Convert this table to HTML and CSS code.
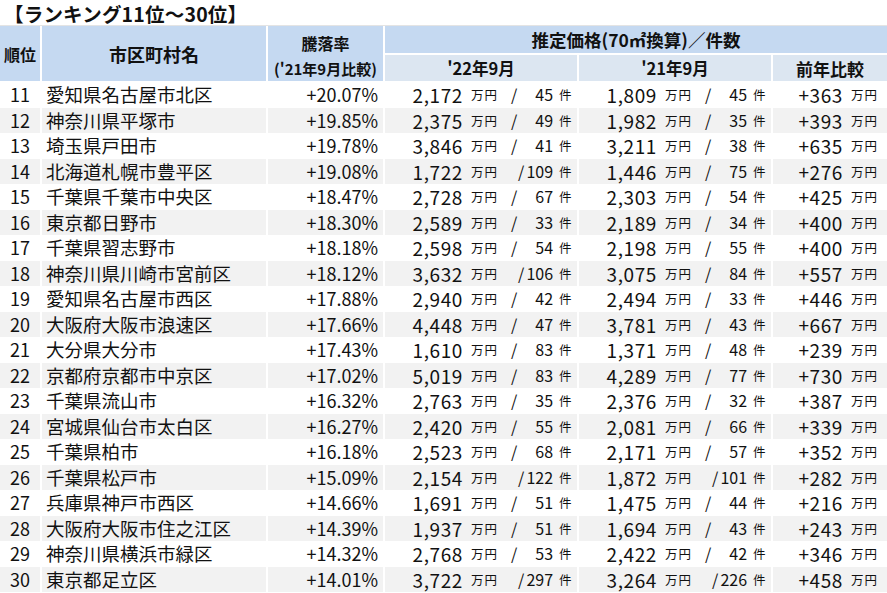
FILE: index.html
```html
<!DOCTYPE html>
<html lang="ja">
<head>
<meta charset="utf-8">
<title>ランキング11位～30位</title>
<link rel="stylesheet" href="styles.css">
</head>
<body>
<div class="title">【ランキング11位～30位】</div>
<div class="thead">
  <div class="h dark rank">順位</div>
  <div class="h dark name">市区町村名</div>
  <div class="h dark rate"><span class="l1">騰落率</span><span class="l2">('21年9月比較)</span></div>
  <div class="h dark price">推定価格(70㎡換算)／件数</div>
  <div class="h light y22">'22年9月</div>
  <div class="h light y21">'21年9月</div>
  <div class="h light diff">前年比較</div>
</div>
<div class="tbody">
  <div class="row"><div class="c r">11</div><div class="c nm">愛知県名古屋市北区</div><div class="c pc">+20.07%</div><div class="c p"><span class="n">2,172</span><span class="u">万円</span><span class="k"><span>/</span><span>45</span></span><span class="u kn">件</span></div><div class="c p"><span class="n">1,809</span><span class="u">万円</span><span class="k"><span>/</span><span>45</span></span><span class="u kn">件</span></div><div class="c d"><span class="n">+363</span><span class="u">万円</span></div></div>
  <div class="row"><div class="c r">12</div><div class="c nm">神奈川県平塚市</div><div class="c pc">+19.85%</div><div class="c p"><span class="n">2,375</span><span class="u">万円</span><span class="k"><span>/</span><span>49</span></span><span class="u kn">件</span></div><div class="c p"><span class="n">1,982</span><span class="u">万円</span><span class="k"><span>/</span><span>35</span></span><span class="u kn">件</span></div><div class="c d"><span class="n">+393</span><span class="u">万円</span></div></div>
  <div class="row"><div class="c r">13</div><div class="c nm">埼玉県戸田市</div><div class="c pc">+19.78%</div><div class="c p"><span class="n">3,846</span><span class="u">万円</span><span class="k"><span>/</span><span>41</span></span><span class="u kn">件</span></div><div class="c p"><span class="n">3,211</span><span class="u">万円</span><span class="k"><span>/</span><span>38</span></span><span class="u kn">件</span></div><div class="c d"><span class="n">+635</span><span class="u">万円</span></div></div>
  <div class="row"><div class="c r">14</div><div class="c nm">北海道札幌市豊平区</div><div class="c pc">+19.08%</div><div class="c p"><span class="n">1,722</span><span class="u">万円</span><span class="k w3"><span>/</span><span>109</span></span><span class="u kn">件</span></div><div class="c p"><span class="n">1,446</span><span class="u">万円</span><span class="k"><span>/</span><span>75</span></span><span class="u kn">件</span></div><div class="c d"><span class="n">+276</span><span class="u">万円</span></div></div>
  <div class="row"><div class="c r">15</div><div class="c nm">千葉県千葉市中央区</div><div class="c pc">+18.47%</div><div class="c p"><span class="n">2,728</span><span class="u">万円</span><span class="k"><span>/</span><span>67</span></span><span class="u kn">件</span></div><div class="c p"><span class="n">2,303</span><span class="u">万円</span><span class="k"><span>/</span><span>54</span></span><span class="u kn">件</span></div><div class="c d"><span class="n">+425</span><span class="u">万円</span></div></div>
  <div class="row"><div class="c r">16</div><div class="c nm">東京都日野市</div><div class="c pc">+18.30%</div><div class="c p"><span class="n">2,589</span><span class="u">万円</span><span class="k"><span>/</span><span>33</span></span><span class="u kn">件</span></div><div class="c p"><span class="n">2,189</span><span class="u">万円</span><span class="k"><span>/</span><span>34</span></span><span class="u kn">件</span></div><div class="c d"><span class="n">+400</span><span class="u">万円</span></div></div>
  <div class="row"><div class="c r">17</div><div class="c nm">千葉県習志野市</div><div class="c pc">+18.18%</div><div class="c p"><span class="n">2,598</span><span class="u">万円</span><span class="k"><span>/</span><span>54</span></span><span class="u kn">件</span></div><div class="c p"><span class="n">2,198</span><span class="u">万円</span><span class="k"><span>/</span><span>55</span></span><span class="u kn">件</span></div><div class="c d"><span class="n">+400</span><span class="u">万円</span></div></div>
  <div class="row"><div class="c r">18</div><div class="c nm">神奈川県川崎市宮前区</div><div class="c pc">+18.12%</div><div class="c p"><span class="n">3,632</span><span class="u">万円</span><span class="k w3"><span>/</span><span>106</span></span><span class="u kn">件</span></div><div class="c p"><span class="n">3,075</span><span class="u">万円</span><span class="k"><span>/</span><span>84</span></span><span class="u kn">件</span></div><div class="c d"><span class="n">+557</span><span class="u">万円</span></div></div>
  <div class="row"><div class="c r">19</div><div class="c nm">愛知県名古屋市西区</div><div class="c pc">+17.88%</div><div class="c p"><span class="n">2,940</span><span class="u">万円</span><span class="k"><span>/</span><span>42</span></span><span class="u kn">件</span></div><div class="c p"><span class="n">2,494</span><span class="u">万円</span><span class="k"><span>/</span><span>33</span></span><span class="u kn">件</span></div><div class="c d"><span class="n">+446</span><span class="u">万円</span></div></div>
  <div class="row"><div class="c r">20</div><div class="c nm">大阪府大阪市浪速区</div><div class="c pc">+17.66%</div><div class="c p"><span class="n">4,448</span><span class="u">万円</span><span class="k"><span>/</span><span>47</span></span><span class="u kn">件</span></div><div class="c p"><span class="n">3,781</span><span class="u">万円</span><span class="k"><span>/</span><span>43</span></span><span class="u kn">件</span></div><div class="c d"><span class="n">+667</span><span class="u">万円</span></div></div>
  <div class="row"><div class="c r">21</div><div class="c nm">大分県大分市</div><div class="c pc">+17.43%</div><div class="c p"><span class="n">1,610</span><span class="u">万円</span><span class="k"><span>/</span><span>83</span></span><span class="u kn">件</span></div><div class="c p"><span class="n">1,371</span><span class="u">万円</span><span class="k"><span>/</span><span>48</span></span><span class="u kn">件</span></div><div class="c d"><span class="n">+239</span><span class="u">万円</span></div></div>
  <div class="row"><div class="c r">22</div><div class="c nm">京都府京都市中京区</div><div class="c pc">+17.02%</div><div class="c p"><span class="n">5,019</span><span class="u">万円</span><span class="k"><span>/</span><span>83</span></span><span class="u kn">件</span></div><div class="c p"><span class="n">4,289</span><span class="u">万円</span><span class="k"><span>/</span><span>77</span></span><span class="u kn">件</span></div><div class="c d"><span class="n">+730</span><span class="u">万円</span></div></div>
  <div class="row"><div class="c r">23</div><div class="c nm">千葉県流山市</div><div class="c pc">+16.32%</div><div class="c p"><span class="n">2,763</span><span class="u">万円</span><span class="k"><span>/</span><span>35</span></span><span class="u kn">件</span></div><div class="c p"><span class="n">2,376</span><span class="u">万円</span><span class="k"><span>/</span><span>32</span></span><span class="u kn">件</span></div><div class="c d"><span class="n">+387</span><span class="u">万円</span></div></div>
  <div class="row"><div class="c r">24</div><div class="c nm">宮城県仙台市太白区</div><div class="c pc">+16.27%</div><div class="c p"><span class="n">2,420</span><span class="u">万円</span><span class="k"><span>/</span><span>55</span></span><span class="u kn">件</span></div><div class="c p"><span class="n">2,081</span><span class="u">万円</span><span class="k"><span>/</span><span>66</span></span><span class="u kn">件</span></div><div class="c d"><span class="n">+339</span><span class="u">万円</span></div></div>
  <div class="row"><div class="c r">25</div><div class="c nm">千葉県柏市</div><div class="c pc">+16.18%</div><div class="c p"><span class="n">2,523</span><span class="u">万円</span><span class="k"><span>/</span><span>68</span></span><span class="u kn">件</span></div><div class="c p"><span class="n">2,171</span><span class="u">万円</span><span class="k"><span>/</span><span>57</span></span><span class="u kn">件</span></div><div class="c d"><span class="n">+352</span><span class="u">万円</span></div></div>
  <div class="row"><div class="c r">26</div><div class="c nm">千葉県松戸市</div><div class="c pc">+15.09%</div><div class="c p"><span class="n">2,154</span><span class="u">万円</span><span class="k w3"><span>/</span><span>122</span></span><span class="u kn">件</span></div><div class="c p"><span class="n">1,872</span><span class="u">万円</span><span class="k w3"><span>/</span><span>101</span></span><span class="u kn">件</span></div><div class="c d"><span class="n">+282</span><span class="u">万円</span></div></div>
  <div class="row"><div class="c r">27</div><div class="c nm">兵庫県神戸市西区</div><div class="c pc">+14.66%</div><div class="c p"><span class="n">1,691</span><span class="u">万円</span><span class="k"><span>/</span><span>51</span></span><span class="u kn">件</span></div><div class="c p"><span class="n">1,475</span><span class="u">万円</span><span class="k"><span>/</span><span>44</span></span><span class="u kn">件</span></div><div class="c d"><span class="n">+216</span><span class="u">万円</span></div></div>
  <div class="row"><div class="c r">28</div><div class="c nm">大阪府大阪市住之江区</div><div class="c pc">+14.39%</div><div class="c p"><span class="n">1,937</span><span class="u">万円</span><span class="k"><span>/</span><span>51</span></span><span class="u kn">件</span></div><div class="c p"><span class="n">1,694</span><span class="u">万円</span><span class="k"><span>/</span><span>43</span></span><span class="u kn">件</span></div><div class="c d"><span class="n">+243</span><span class="u">万円</span></div></div>
  <div class="row"><div class="c r">29</div><div class="c nm">神奈川県横浜市緑区</div><div class="c pc">+14.32%</div><div class="c p"><span class="n">2,768</span><span class="u">万円</span><span class="k"><span>/</span><span>53</span></span><span class="u kn">件</span></div><div class="c p"><span class="n">2,422</span><span class="u">万円</span><span class="k"><span>/</span><span>42</span></span><span class="u kn">件</span></div><div class="c d"><span class="n">+346</span><span class="u">万円</span></div></div>
  <div class="row"><div class="c r">30</div><div class="c nm">東京都足立区</div><div class="c pc">+14.01%</div><div class="c p"><span class="n">3,722</span><span class="u">万円</span><span class="k w3"><span>/</span><span>297</span></span><span class="u kn">件</span></div><div class="c p"><span class="n">3,264</span><span class="u">万円</span><span class="k w3"><span>/</span><span>226</span></span><span class="u kn">件</span></div><div class="c d"><span class="n">+458</span><span class="u">万円</span></div></div>
</div>
</body>
</html>
```
FILE: styles.css
```css
html, body {
  margin: 0;
  padding: 0;
  background: #ffffff;
}
body {
  width: 887px;
  height: 593px;
  overflow: hidden;
  font-family: "Noto Sans CJK JP", "Noto Sans", sans-serif;
  color: #111111;
}
.title {
  height: 25px;
  line-height: 27.5px;
  padding-left: 4px;
  font-size: 19.5px;
  font-weight: 700;
  border-bottom: 1px solid #e4e4e4;
  white-space: nowrap;
  letter-spacing: 0.2px;
}
.thead,
.row {
  display: grid;
  grid-template-columns: 40px 224px 115px 192px 192px 114px;
  column-gap: 2px;
}
.thead {
  grid-template-rows: 27px 26px;
  row-gap: 2px;
  margin-bottom: 1px;
}
.h {
  display: flex;
  align-items: center;
  justify-content: center;
  font-weight: 700;
  font-size: 16.5px;
  white-space: nowrap;
}
.dark { background: #c5d9f1; }
.light { background: #dce6f1; }
.rank { grid-row: 1 / 3; grid-column: 1; font-size: 16px; }
.name { grid-row: 1 / 3; grid-column: 2; font-size: 18px; }
.rate {
  grid-row: 1 / 3;
  grid-column: 3;
  flex-direction: column;
  justify-content: flex-start;
  padding-top: 5px;
  font-size: 16px;
}
.rate .l1 { line-height: 24px; }
.rate .l2 { line-height: 22px; margin-top: 3px; font-size: 15px; }
.price { grid-row: 1; grid-column: 4 / 7; font-size: 17.5px; }
.y22 { grid-row: 2; grid-column: 4; }
.y21 { grid-row: 2; grid-column: 5; }
.diff { grid-row: 2; grid-column: 6; font-size: 17px; }

.row {
  height: 25.5px;
}
.row:nth-child(even) .c {
  background: #f2f2f2;
}
.c {
  display: flex;
  align-items: center;
  white-space: nowrap;
  font-size: 18px;
  line-height: 25px;
}
.r { justify-content: center; }
.nm { padding-left: 4px; font-size: 18.5px; }
.pc { justify-content: flex-end; padding-right: 5px; }
.p .n {
  width: 78px;
  text-align: right;
  font-size: 19px;
  letter-spacing: 0.6px;
}
.u {
  font-size: 12.5px;
  letter-spacing: 1px;
  margin-left: 8px;
}
.k {
  display: flex;
  justify-content: space-between;
  width: 42px;
  margin-left: 13px;
  font-size: 16px;
}
.k.w3 {
  justify-content: flex-end;
  column-gap: 2px;
}
.kn { margin-left: 6px; }
.d {
  justify-content: flex-end;
  padding-right: 9px;
}
.d .n { font-size: 19px; letter-spacing: 0.6px; }
```
